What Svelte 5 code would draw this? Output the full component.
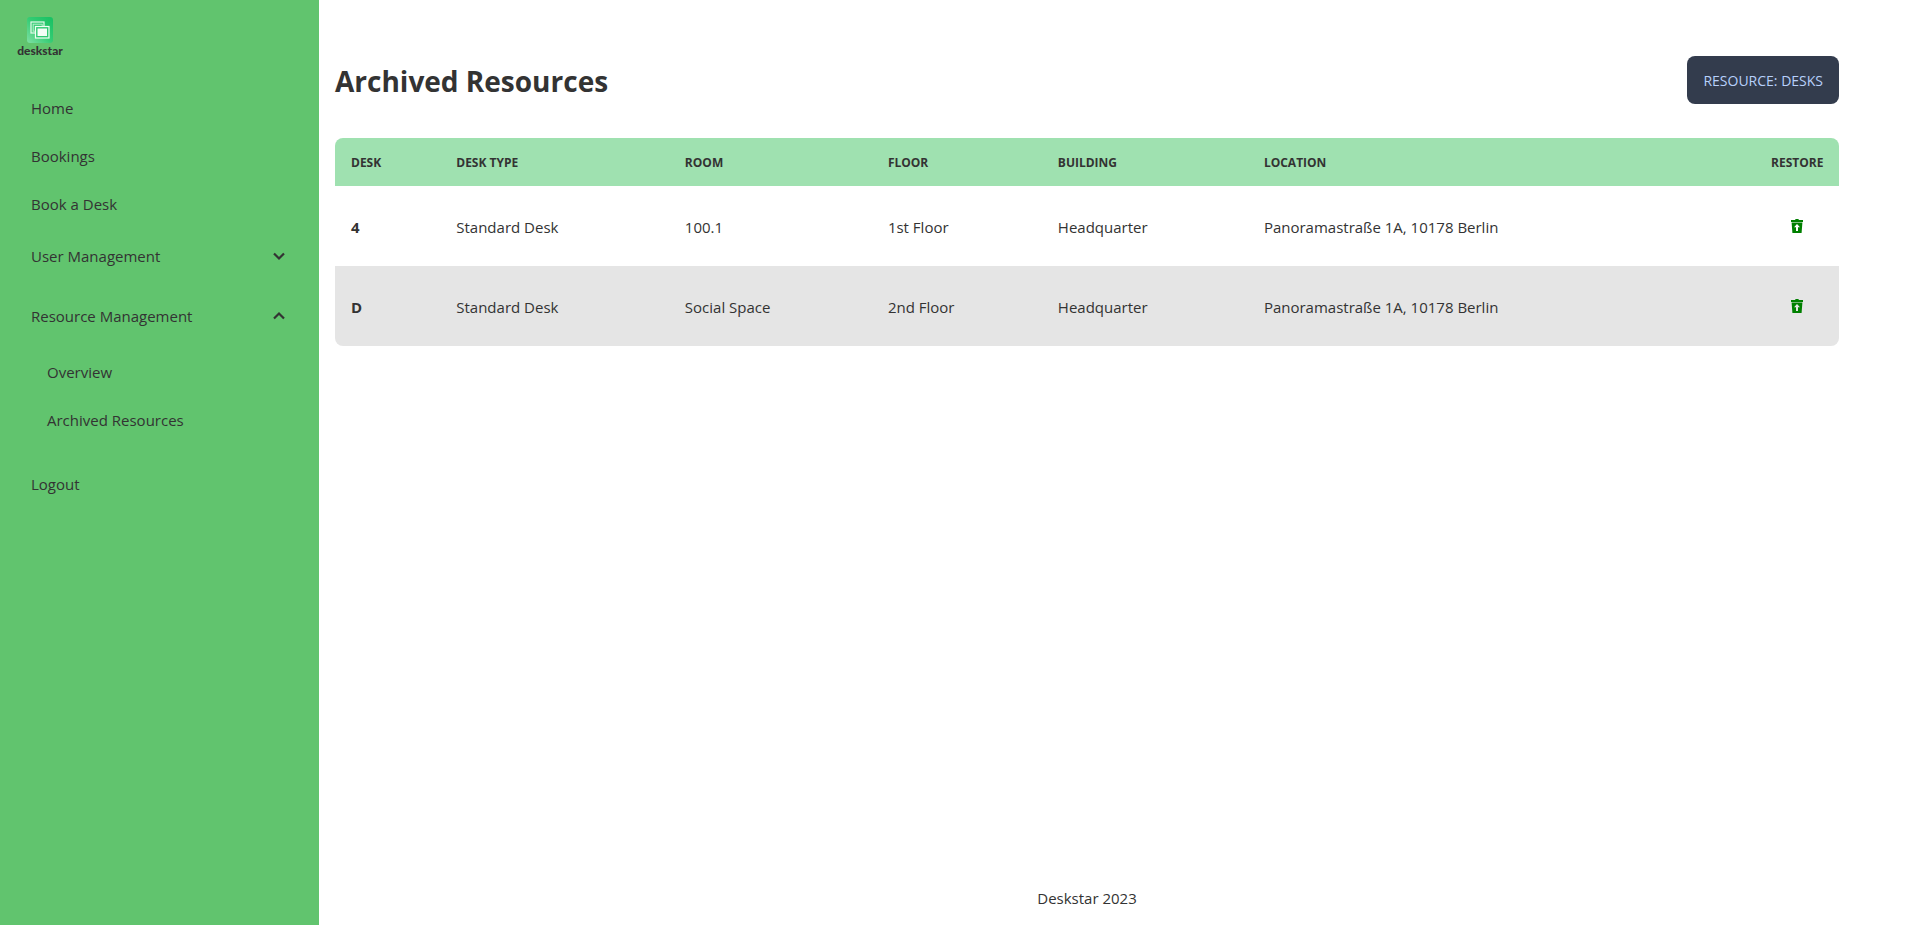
<script>
  let userOpen = $state(false);
  let resourceOpen = $state(true);

  const topLinks = ['Home', 'Bookings', 'Book a Desk'];
  const desks = [
    { name: '4', type: 'Standard Desk', room: '100.1', floor: '1st Floor', building: 'Headquarter', location: 'Panoramastraße 1A, 10178 Berlin' },
    { name: 'D', type: 'Standard Desk', room: 'Social Space', floor: '2nd Floor', building: 'Headquarter', location: 'Panoramastraße 1A, 10178 Berlin' },
  ];
</script>

{#snippet chevron(open)}
  <svg class="chevron" class:open viewBox="0 0 20 20" aria-hidden="true">
    <path d="M5 7.5 10 12.5 15 7.5" fill="none" stroke="currentColor" stroke-width="2.2" />
  </svg>
{/snippet}

<div class="layout">
  <aside>
    <a class="logo" href="#home" aria-label="deskstar home">
      <svg viewBox="0 0 26 26" aria-hidden="true">
        <defs>
          <linearGradient id="tile" x1="0" y1="1" x2="1" y2="0">
            <stop offset="0" stop-color="#7fe0a4" />
            <stop offset="0.5" stop-color="#35cc74" />
            <stop offset="1" stop-color="#16c062" />
          </linearGradient>
        </defs>
        <rect width="26" height="26" rx="3" fill="url(#tile)" />
        <rect x="4" y="5" width="13" height="11" fill="none" stroke="#e4fbec" stroke-width="1.2" />
        <rect x="6.2" y="7.2" width="9" height="7" fill="none" stroke="#b5efc9" stroke-width="1" />
        <rect x="8.5" y="9.5" width="13.5" height="11.5" fill="#2fc971" stroke="#f0fff5" stroke-width="1.2" />
        <rect x="10.5" y="11.5" width="9.5" height="7.5" fill="#f4fdf7" />
      </svg>
      <span>deskstar</span>
    </a>
    <nav>
      {#each topLinks as label}
        <a class="item" href="#{label}">{label}</a>
      {/each}
      <button class="group" aria-expanded={userOpen} onclick={() => (userOpen = !userOpen)}>
        User Management {@render chevron(userOpen)}
      </button>
      <button class="group" aria-expanded={resourceOpen} onclick={() => (resourceOpen = !resourceOpen)}>
        Resource Management {@render chevron(resourceOpen)}
      </button>
      {#if resourceOpen}
        <div class="sub">
          <a class="item" href="#overview">Overview</a>
          <a class="item" href="#archived">Archived Resources</a>
        </div>
      {/if}
      <a class="item" href="#logout">Logout</a>
    </nav>
  </aside>

  <main>
    <header>
      <h1>Archived Resources</h1>
      <button class="resource">Resource: Desks</button>
    </header>
    <table>
      <thead>
        <tr>
          <th class="desk">Desk</th>
          <th class="type">Desk Type</th>
          <th class="room">Room</th>
          <th class="floor">Floor</th>
          <th class="building">Building</th>
          <th>Location</th>
          <th class="restore">Restore</th>
        </tr>
      </thead>
      <tbody>
        {#each desks as desk}
          <tr>
            <td class="name">{desk.name}</td>
            <td>{desk.type}</td>
            <td>{desk.room}</td>
            <td>{desk.floor}</td>
            <td>{desk.building}</td>
            <td>{desk.location}</td>
            <td class="restore">
              <button aria-label="Restore desk {desk.name}">
                <svg viewBox="0 0 16 16" aria-hidden="true">
                  <path fill="#008000" d="M2 2h4l.7-1h2.6l.7 1h4v2H2z" />
                  <path fill="#008000" fill-rule="evenodd" d="M2.6 4.6h10.8L12.6 15H3.4zM8 6 5 9.2h2V13h2V9.2h2z" />
                </svg>
              </button>
            </td>
          </tr>
        {/each}
      </tbody>
    </table>
    <footer>Deskstar 2023</footer>
  </main>
</div>

<style>
  :global(body) {
    margin: 0;
  }
  .layout {
    display: grid;
    grid-template-columns: 319px 1fr;
    min-height: 100vh;
    font: 15px/24px 'Segoe UI', 'Open Sans', sans-serif;
    color: #333;
    background: #fff;
  }
  a {
    color: inherit;
    text-decoration: none;
  }
  button {
    border: 0;
    padding: 0;
    background: none;
    font: inherit;
    color: inherit;
    cursor: pointer;
  }
  aside {
    background: #61c46e;
  }
  .logo {
    display: flex;
    flex-direction: column;
    align-items: center;
    width: 48px;
    height: 67px;
    padding: 17px 16px 0;
  }
  .logo svg {
    width: 26px;
    height: 26px;
    flex: none;
  }
  .logo span {
    font: 900 12px/16px Lato, sans-serif;
  }
  nav {
    display: flex;
    flex-direction: column;
  }
  .item {
    padding: 12px 31px;
  }
  .group {
    display: flex;
    align-items: center;
    justify-content: space-between;
    box-sizing: border-box;
    height: 60px;
    padding: 0 30px 4px 31px;
    text-align: left;
  }
  .chevron {
    width: 20px;
    height: 20px;
  }
  .chevron.open {
    transform: rotate(180deg);
  }
  .sub {
    display: flex;
    flex-direction: column;
    padding: 0 16px 16px;
  }
  main {
    display: flex;
    flex-direction: column;
    padding: 56px 80px 15px 16px;
  }
  header {
    display: flex;
    align-items: center;
    justify-content: space-between;
    margin-bottom: 34px;
  }
  h1 {
    margin: 0;
    padding-top: 2px;
    font-size: 28px;
    line-height: 36px;
    font-weight: 700;
  }
  .resource {
    height: 48px;
    padding: 1px 16px 0;
    border-radius: 8px;
    background: #333c4d;
    color: #b7d0fb;
    font-size: 14px;
    line-height: 14px;
    text-transform: uppercase;
  }
  table {
    width: 100%;
    table-layout: fixed;
    border-spacing: 0;
  }
  th,
  td {
    box-sizing: border-box;
    padding: 2px 16px 0;
    text-align: left;
  }
  th {
    height: 48px;
    background: #9fe1b0;
    font-size: 12px;
    line-height: 16px;
    font-weight: 700;
    text-transform: uppercase;
  }
  td {
    height: 80px;
  }
  .desk { width: 7%; }
  .type { width: 15.2%; }
  .room { width: 13.5%; }
  .floor { width: 11.3%; }
  .building { width: 13.7%; }
  th.restore {
    width: 84px;
    text-align: right;
  }
  td.restore button {
    display: block;
    margin: 0 auto;
  }
  td.restore {
    padding: 0 16px;
  }
  td.restore svg {
    display: block;
    width: 16px;
    height: 16px;
  }
  .name {
    font-weight: 700;
  }
  tbody tr:nth-child(even) td {
    background: #e5e5e5;
  }
  th:first-child { border-top-left-radius: 8px; }
  th:last-child { border-top-right-radius: 8px; }
  tbody tr:last-child td:first-child { border-bottom-left-radius: 8px; }
  tbody tr:last-child td:last-child { border-bottom-right-radius: 8px; }
  footer {
    margin-top: auto;
    text-align: center;
  }
</style>
